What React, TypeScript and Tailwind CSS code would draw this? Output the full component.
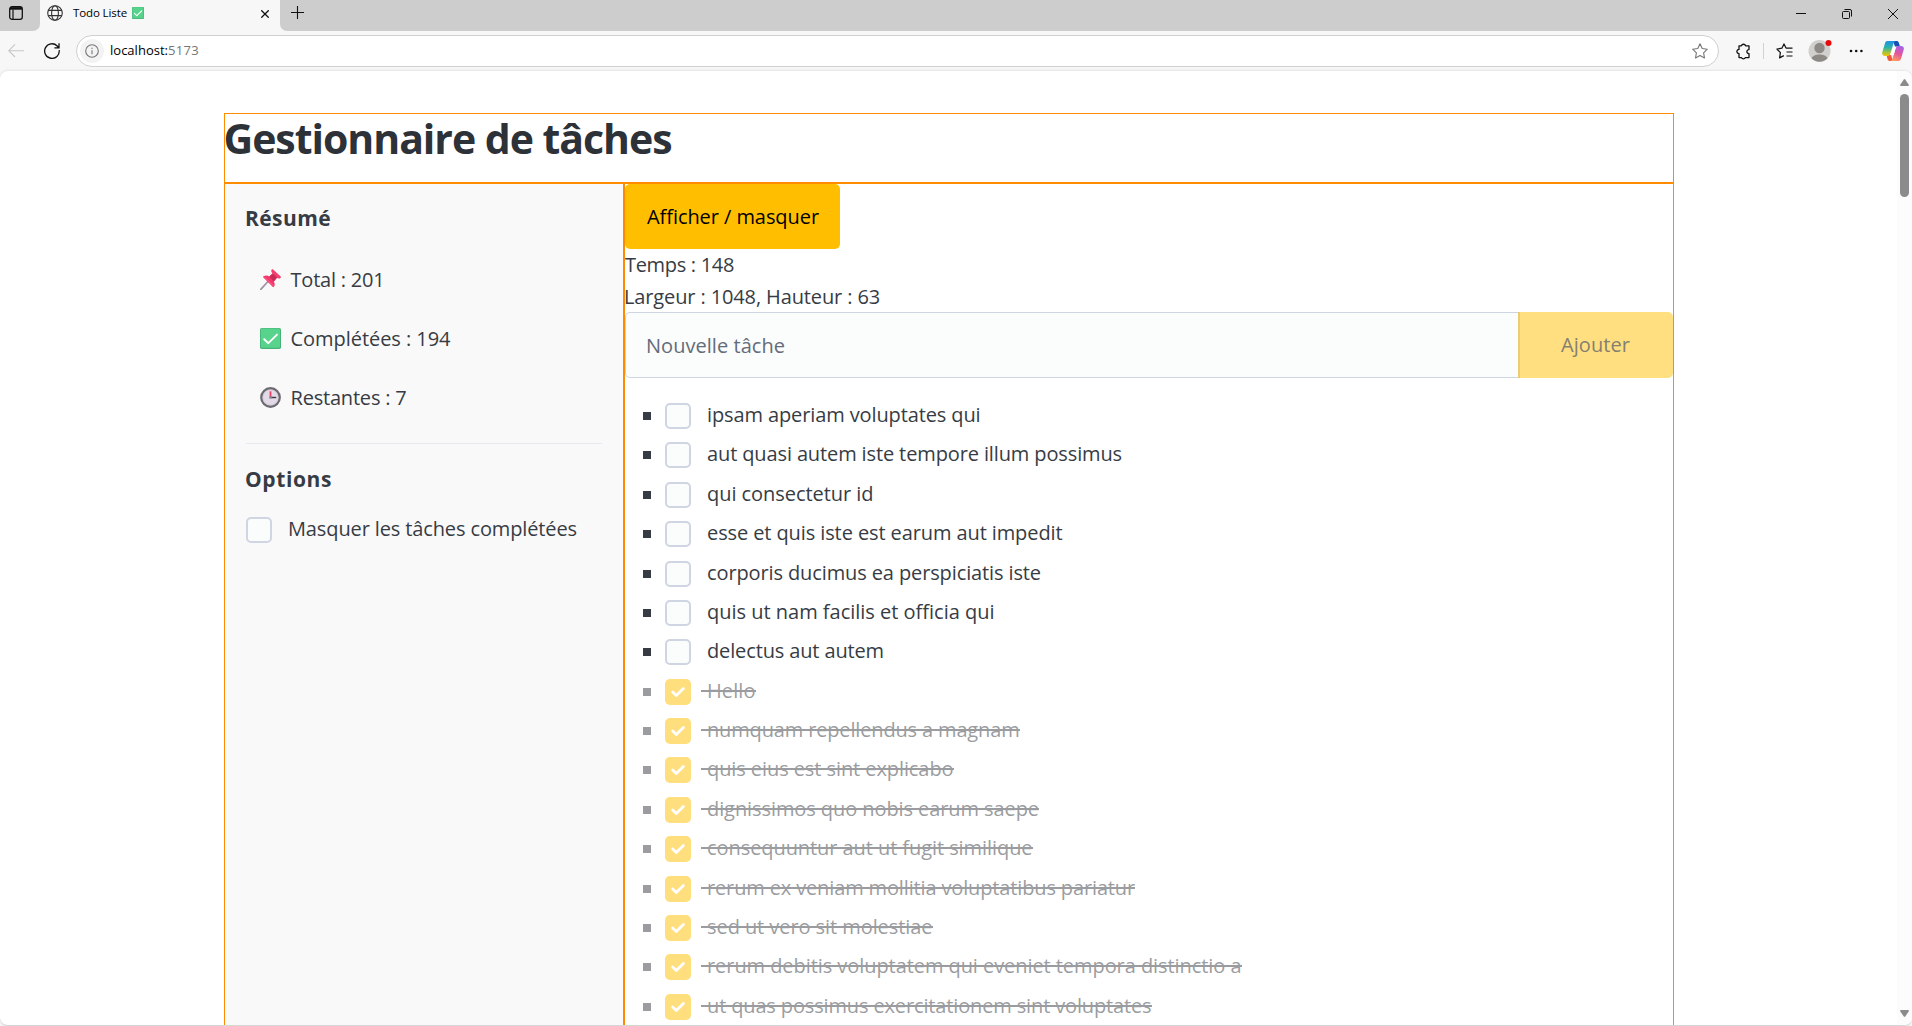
import { useLayoutEffect, useRef } from "react";
import type { ReactNode } from "react";

const SANS = "font-['Open_Sans','Noto_Sans',sans-serif]";

/** Single line of text, tracked so that it occupies exactly `w` pixels. */
function Fit({ children, w, className = "" }: { children: string; w: number; className?: string }) {
  const ref = useRef<HTMLSpanElement>(null);
  useLayoutEffect(() => {
    const el = ref.current;
    if (!el) return;
    el.style.letterSpacing = "0px";
    const natural = el.getBoundingClientRect().width;
    el.style.letterSpacing = `${(w - natural) / children.length}px`;
  }, [children, w]);
  return (
    <span ref={ref} className={`inline-block whitespace-pre ${className}`}>
      {children}
    </span>
  );
}

function CheckEmoji({ className = "" }: { className?: string }) {
  return (
    <svg viewBox="0 0 21 21" className={className}>
      <rect width="21" height="21" rx="1.8" fill="#45b277" />
      <rect x="0.8" y="0.5" width="19.2" height="19.3" rx="1.4" fill="#57d38c" />
      <path d="M4.2 11.2 8.4 15.2 17 6.6" fill="none" stroke="#fff" strokeWidth="1.9" strokeLinecap="round" strokeLinejoin="round" />
    </svg>
  );
}

function PinEmoji() {
  return (
    <svg viewBox="0 0 21 21" className="size-[21px]">
      <path d="M8 12.5 0.8 20.4" stroke="#9b93a2" strokeWidth="1.7" strokeLinecap="round" />
      <path d="M3.5 7.3c2-1.2 4.3-1 5.800.1l4-3.400 4.200 4.200-3.700 4.300c1.200 1.900 1.200 3.900.1 5.300-.4.500-.9.400-1.300 0L3.400 8.600c-.4-.4-.4-1 .1-1.300Z" fill="#f4386b" />
      <path d="m9.300 7.400 4-3.700 4.200 4.400-3.700 4.400Z" fill="#c92b58" />
      <path d="M11.400.9c.5-.7 1.300-.8 2-.2l7 6.600c.7.700.6 1.500-.1 2-1 .6-2.300.3-3.200-.5l-4.800-4.700c-.9-.9-1.400-2.200-.9-3.200Z" fill="#f73d6d" />
      <path d="m4.800 8.300 8.600 8.500" stroke="#ff6d8c" strokeWidth="0.9" />
    </svg>
  );
}

function ClockEmoji() {
  return (
    <svg viewBox="0 0 21 21" className="size-[21px]">
      <circle cx="10.500" cy="10.500" r="9.200" fill="#e2dbe7" stroke="#6d6971" strokeWidth="2.400" />
      <circle cx="10.500" cy="10.500" r="7.700" fill="none" stroke="#c9c2cf" strokeWidth="0.7" />
      <path d="M10.500 4.300v6" stroke="#f23f68" strokeWidth="1.800" />
      <path d="M10.500 10.500h5.700" stroke="#3d3745" strokeWidth="1.400" />
      <circle cx="10.500" cy="10.500" r="1.300" fill="#8a8391" />
    </svg>
  );
}

function TabBar() {
  return (
    <div className="flex h-[31px] bg-[#cdcdcd] text-black">
      <div className="flex h-[31px] w-10 bg-[#f7f7f7]">
        <div className="flex w-10 rounded-br-[7px] bg-[#cdcdcd] pt-[6px] pl-[9px]">
          <svg viewBox="0 0 14 14" className="size-[14px]" fill="none" stroke="#111">
            <rect x="0.700" y="0.700" width="12.600" height="12.600" rx="2.300" strokeWidth="1.300" />
            <path d="M1 2.400h12" strokeWidth="2.600" />
            <path d="M4 3.500v9.500" strokeWidth="1.200" />
          </svg>
        </div>
      </div>
      <div className="flex h-[31px] w-[240px] items-start bg-[#f7f7f7] pl-[7px]">
        <svg viewBox="0 0 16 16" className="mt-[5px] size-4" fill="none" stroke="#333" strokeWidth="1.100">
          <circle cx="8" cy="8" r="7.300" />
          <ellipse cx="8" cy="8" rx="3.400" ry="7.300" />
          <path d="M1.300 5.400h13.400M1.300 10.600h13.400" />
        </svg>
        <div className="mt-[5px] ml-[10px] flex h-4 items-center text-[11.500px]">
          <Fit w={54}>Todo Liste</Fit>
        </div>
        <CheckEmoji className="mt-[7px] ml-[5px] size-3" />
        <svg viewBox="0 0 8 8" className="mt-[10px] ml-[116.500px] size-2" stroke="#111" strokeWidth="1.300">
          <path d="m.300.300 7.400 7.400M7.700.300.300 7.700" />
        </svg>
      </div>
      <div className="h-[31px] w-3 bg-[#f7f7f7]">
        <div className="h-[31px] w-3 rounded-bl-[7px] bg-[#cdcdcd]" />
      </div>
      <svg viewBox="0 0 14 14" className="mt-[6px] -ml-px size-[14px]" stroke="#111" strokeWidth="1.100">
        <path d="M6.500 0v13M0 6.500h13" />
      </svg>
      <div className="ml-auto flex pr-[14px]">
        <svg viewBox="0 0 10 10" className="mt-[9px] size-[10px]" stroke="#111">
          <path d="M0 4.500h10" />
        </svg>
        <svg viewBox="0 0 10 10" className="mt-[9px] ml-9 size-[10px]" fill="none" stroke="#111">
          <rect x="0.500" y="2.500" width="7" height="7" rx="1" />
          <path d="M2.500.500H8A1.500 1.500 0 0 1 9.500 2v5.500" />
        </svg>
        <svg viewBox="0 0 10 10" className="mt-[9px] ml-9 size-[10px]" stroke="#111">
          <path d="m0 0 10 10M10 0 0 10" />
        </svg>
      </div>
    </div>
  );
}

function Toolbar() {
  return (
    <div className="flex h-10 items-start bg-[#f7f7f7]">
      <svg viewBox="0 0 16 14" className="mt-[13px] ml-2 h-[14px] w-4" fill="none" stroke="#c6c6c6" strokeWidth="1.100">
        <path d="M16 6.700H.8M7 .4.8 6.700 7 13" />
      </svg>
      <svg viewBox="0 0 16 16" className="mt-3 ml-5 size-4" fill="none" stroke="#111" strokeWidth="1.300">
        <path d="M15.200 7.200A7.300 7.300 0 1 1 13.200 3l1.500 1.700M15 .3v4.500h-4.600" />
      </svg>
      <div className="mt-[4px] ml-4 flex h-8 w-[1643px] items-center rounded-full border border-[#d0d0d0] bg-white pr-[10px] pl-[3px]">
        <div className="flex size-6 items-center justify-center rounded-full bg-[#f3f3f3]">
          <svg viewBox="0 0 14 14" className="size-[14px]" fill="none" stroke="#767676" strokeWidth="1.100">
            <circle cx="7" cy="7" r="6.300" />
            <path d="M7 6.300v4" />
            <circle cx="7" cy="4.200" r="0.400" fill="#767676" strokeWidth="0.600" />
          </svg>
        </div>
        <div className="ml-[6px] flex items-center text-[13px] text-black">
          <Fit w={58}>localhost:</Fit>
          <Fit w={31} className="text-[#767676]">5173</Fit>
        </div>
        <svg viewBox="0 0 16 16" className="ml-auto size-4" fill="none" stroke="#767676" strokeWidth="1.100" strokeLinejoin="round">
          <path d="m8 .8 2.200 4.700 5.100.7-3.700 3.600.9 5.200L8 12.600 3.500 15l.9-5.200L.7 6.200l5.100-.7Z" />
        </svg>
      </div>
      <svg viewBox="0 0 16 17" className="mt-[12px] ml-4 h-[17px] w-4" fill="none" stroke="#111" strokeWidth="1.300" strokeLinejoin="round">
        <path d="M4 2.800h2.400a2.200 2.200 0 0 1 4.200 0H14v3.800a2 2 0 0 0-.2 4h.2v4h-3.600a2.200 2.200 0 0 1-4 0H4v-4a2.100 2.100 0 1 1 0-4.200Z" />
      </svg>
      <div className="mt-3 ml-3 h-4 w-px bg-[#d1d1d1]" />
      <svg viewBox="0 0 17 16" className="mt-[12px] ml-3 h-4 w-[17px]" fill="none" stroke="#111" strokeWidth="1.200" strokeLinejoin="round">
        <path d="M11.300 5H10L8 .9 5.900 5.200.9 6l3.500 3.600-.8 5.300 4.200-2.300M10 5.200h6.500M10.500 9h6M10.500 13h6" />
      </svg>
      <svg viewBox="0 0 24 24" className="mt-[8px] ml-[15px] size-6">
        <circle cx="11.500" cy="12" r="11" fill="#d2d0ce" />
        <circle cx="11.500" cy="9" r="5.200" fill="#8d8985" />
        <path d="M3.500 19.300c1.800-5.200 14.200-5.200 16 0a11 11 0 0 1-16 0Z" fill="#8d8985" />
        <circle cx="20.500" cy="4" r="3" fill="#e60b0b" />
      </svg>
      <svg viewBox="0 0 14 4" className="mt-[18px] ml-[17px] h-1 w-[14px]" fill="#111">
        <circle cx="2" cy="2" r="1.300" />
        <circle cx="7.200" cy="2" r="1.300" />
        <circle cx="12.400" cy="2" r="1.300" />
      </svg>
      <svg viewBox="0 0 22 20" className="mt-[10px] ml-[19px] h-5 w-[22px]">
        <defs>
          <linearGradient id="cpA" x1="0" y1="0" x2="0" y2="1">
            <stop offset="0" stopColor="#1d8fe8" />
            <stop offset="0.450" stopColor="#2fb3a5" />
            <stop offset="0.750" stopColor="#a2c33b" />
            <stop offset="1" stopColor="#f5c400" />
          </linearGradient>
          <linearGradient id="cpB" x1="0.700" y1="0" x2="0.300" y2="1">
            <stop offset="0" stopColor="#a561e8" />
            <stop offset="0.500" stopColor="#e5569b" />
            <stop offset="1" stopColor="#ff9d5b" />
          </linearGradient>
        </defs>
        <path d="M11 0h3.800c1 0 1.700.7 2 1.700L18 5.500h-5Z" fill="#174fb8" />
        <path d="M11 20H7.600c-1 0-1.700-.7-2-1.700L4.500 14H9Z" fill="#f0593b" />
        <path d="M5.500 0h8c-1.200.4-1.700 1.300-2.100 2.700l-2.800 9.300c-.5 1.800-1.400 3-3.200 3H3c-2.200 0-3.300-1.700-2.700-3.700L3 2.200C3.400.9 4.200 0 5.500 0Z" fill="url(#cpA)" />
        <path d="M16.500 20h-8c1.200-.4 1.700-1.300 2.100-2.700L13.400 8c.5-1.800 1.400-3 3.200-3H19c2.200 0 3.300 1.700 2.700 3.700L19 17.800c-.4 1.300-1.200 2.200-2.500 2.200Z" fill="url(#cpB)" />
        <path d="M11.400 6h2.900c-.5.500-.7 1.200-.9 2l-1.700 6H9c-.3 0-.5 0-.7-.1.200-.5.300-1 .500-1.500Z" fill="#fff" />
      </svg>
    </div>
  );
}

function CheckBox({ checked = false }: { checked?: boolean }) {
  if (!checked) {
    return <span className="size-[26px] shrink-0 rounded-[5px] border-2 border-[#cfd5e2] bg-[#fbfcfc]" />;
  }
  return (
    <span className="flex size-[26px] shrink-0 items-center justify-center rounded-[5px] bg-[#ffbf00]">
      <svg viewBox="0 0 26 26" className="size-[26px]" fill="none" stroke="#fff" strokeWidth="2.800" strokeLinecap="round" strokeLinejoin="round">
        <path d="m7.700 13.100 3.600 3.500 7.100-7.200" />
      </svg>
    </span>
  );
}

const TASKS: { title: string; w: number; done?: boolean }[] = [
  { title: "ipsam aperiam voluptates qui", w: 273.5 },
  { title: "aut quasi autem iste tempore illum possimus", w: 415 },
  { title: "qui consectetur id", w: 166.5 },
  { title: "esse et quis iste est earum aut impedit", w: 355.5 },
  { title: "corporis ducimus ea perspiciatis iste", w: 334 },
  { title: "quis ut nam facilis et officia qui", w: 287.5 },
  { title: "delectus aut autem", w: 177 },
  { title: "Hello", w: 48.5, done: true },
  { title: "numquam repellendus a magnam", w: 312.5, done: true },
  { title: "quis eius est sint explicabo", w: 246.5, done: true },
  { title: "dignissimos quo nobis earum saepe", w: 332, done: true },
  { title: "consequuntur aut ut fugit similique", w: 325.5, done: true },
  { title: "rerum ex veniam mollitia voluptatibus pariatur", w: 428, done: true },
  { title: "sed ut vero sit molestiae", w: 225.5, done: true },
  { title: "rerum debitis voluptatem qui eveniet tempora distinctio a", w: 534.5, done: true },
  { title: "ut quas possimus exercitationem sint voluptates", w: 444.5, done: true },
];

function Task({ title, w, done }: { title: string; w: number; done?: boolean }) {
  return (
    <li className={`flex h-[39.375px] shrink-0 items-start ${done ? "opacity-50" : ""}`}>
      <span className="mt-[13px] mr-[14px] size-2 bg-[#373c44]" />
      <span className="mt-1 flex">
        <CheckBox checked={done} />
      </span>
      <span
        className={`ml-[10px] h-8 pl-[6px] leading-8 ${
          done ? "bg-[linear-gradient(#373c44,#373c44)] bg-[length:100%_2px] bg-[position:0_15px] bg-no-repeat" : ""
        }`}
      >
        <Fit w={w}>{title}</Fit>
      </span>
    </li>
  );
}

function Stat({ icon, label, w }: { icon: ReactNode; label: string; w: number }) {
  return (
    <li className="flex h-[59px] items-center gap-[9.500px] pl-[14px]">
      {icon}
      <Fit w={w}>{label}</Fit>
    </li>
  );
}

function Sidebar() {
  return (
    <aside className="w-[400px] shrink-0 border border-b-0 border-[#ff8c00] bg-[#f9f9f9] px-[21px] pt-[18px]">
      <h2 className="-ml-px h-8 text-[21px] leading-8 font-bold text-[#373c44]">
        <Fit w={86}>Résumé</Fit>
      </h2>
      <ul className="mt-4">
        <Stat icon={<PinEmoji />} label="Total : 201" w={94} />
        <Stat icon={<CheckEmoji className="size-[21px]" />} label="Complétées : 194" w={160} />
        <Stat icon={<ClockEmoji />} label="Restantes : 7" w={116} />
      </ul>
      <hr className="mt-4 border-[#e5e8f0]" />
      <h2 className="-ml-px mt-[19px] h-8 text-[21px] leading-8 font-bold text-[#373c44]">
        <Fit w={87}>Options</Fit>
      </h2>
      <label className="mt-[21px] flex h-[28px] items-center gap-4">
        <CheckBox />
        <Fit w={289} className="-mt-0.5">Masquer les tâches complétées</Fit>
      </label>
    </aside>
  );
}

function Main() {
  return (
    <main className="flex w-[1050px] flex-col border border-b-0 border-[#ff8c00]">
      <button className="flex h-[65px] w-[215px] items-center rounded-[5px] bg-[#ffbf00] pt-px pl-[22px] text-black">
        <Fit w={172}>Afficher / masquer</Fit>
      </button>
      <div className="h-8 leading-8">
        <Fit w={109}>Temps : 148</Fit>
      </div>
      <div className="-ml-px h-[31px] leading-[31px]">
        <Fit w={256}>Largeur : 1048, Hauteur : 63</Fit>
      </div>
      <form className="flex h-[66px]">
        <div className="flex w-[893px] items-center rounded-l-[5px] border border-r-0 border-[#cfd5e2] bg-[#fbfcfc] pt-[2px] pl-[20px] text-[#646b79]">
          <Fit w={139}>Nouvelle tâche</Fit>
        </div>
        <button type="button" className="flex flex-1 items-center rounded-r-[5px] border-l-2 border-[#ebcb73] bg-[#ffdf80] pl-[41px] text-[#857f71]">
          <Fit w={69}>Ajouter</Fit>
        </button>
      </form>
      <ul className="mt-[21px] h-[626px] overflow-hidden pl-[18px]">
        {TASKS.map((t) => (
          <Task key={t.title} {...t} />
        ))}
      </ul>
    </main>
  );
}

function Scrollbar() {
  return (
    <div className="flex w-[15px] flex-col items-center bg-[#fcfcfc] pt-2 pb-2">
      <svg viewBox="0 0 9 7" className="h-[7px] w-[9px]" fill="#8b8b8b">
        <path d="M3.800.4.300 5.400Q-.3 7 1 7h7q1.300 0 .7-1.600L5.200.4Q4.500-.300 3.800.4Z" />
      </svg>
      <div className="mt-2 h-[103px] w-[9px] rounded-full bg-[#8b8b8b]" />
      <svg viewBox="0 0 9 7" className="mt-auto h-[7px] w-[9px]" fill="#8b8b8b">
        <path d="M3.800 6.600.300 1.600Q-.3 0 1 0h7q1.300 0 .7 1.600L5.200 6.600Q4.500 7.300 3.800 6.600Z" />
      </svg>
    </div>
  );
}

export default function App() {
  return (
    <div className={`flex h-[1026px] w-[1912px] flex-col overflow-hidden bg-[#f7f7f7] text-[20px] text-[#373c44] ${SANS}`}>
      <TabBar />
      <Toolbar />
      <div className="flex h-[955px] overflow-hidden rounded-[8px] border-b border-[#d6d6d6] bg-white shadow-[0_0_2px_1px_#e4e4e4]">
        <div className="flex min-w-0 flex-1 flex-col pt-[42px] pl-[224px]">
          <header className="h-[70px] w-[1450px] shrink-0 border border-[#ff8c00]">
            <h1 className="-ml-[1.500px] h-[52px] text-[41px] leading-[49px] font-bold text-[#2d3138]">
              <Fit w={448}>Gestionnaire de tâches</Fit>
            </h1>
          </header>
          <div className="flex min-h-0 flex-1">
            <Sidebar />
            <Main />
          </div>
        </div>
        <Scrollbar />
      </div>
    </div>
  );
}
